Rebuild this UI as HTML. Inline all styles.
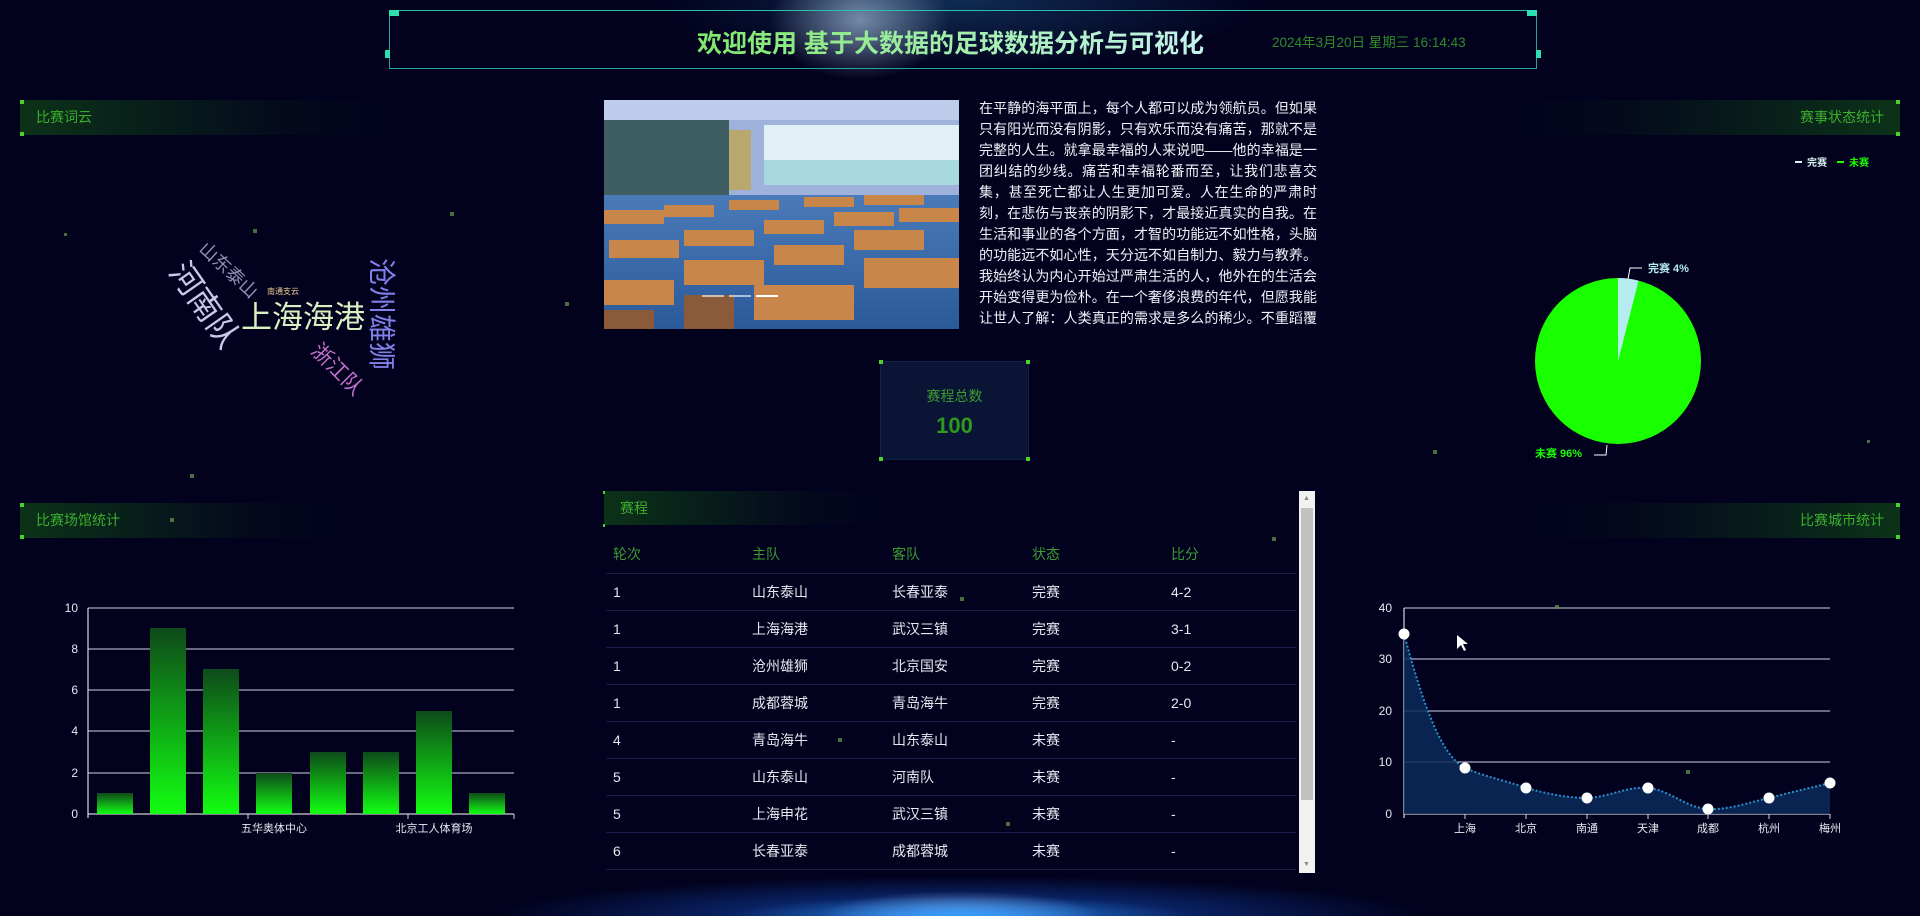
<!DOCTYPE html>
<html><head><meta charset="utf-8">
<style>
*{margin:0;padding:0;box-sizing:border-box}
body{width:1920px;height:916px;overflow:hidden;position:relative;background:#02021e;font-family:"Liberation Sans","Noto Sans CJK SC",sans-serif;color:#fff}
.bg{position:absolute;inset:0;background:
radial-gradient(ellipse 90px 60px at 860px 20px,rgba(200,230,255,.55),transparent),
radial-gradient(ellipse 300px 70px at 960px 0px,rgba(40,120,180,.35),transparent),
radial-gradient(ellipse 460px 40px at 960px 916px,rgba(40,150,255,.95),rgba(20,80,200,.4) 50%,transparent),
radial-gradient(ellipse 140px 25px at 960px 916px,rgba(220,240,255,.9),transparent);}
.hb{position:absolute;height:35px;font-size:14px;color:#3cae2c;line-height:35px}
.hb.l{background:linear-gradient(to right,rgba(20,90,20,.55),rgba(10,40,20,.2) 70%,transparent);padding-left:16px}
.hb.r{background:linear-gradient(to left,rgba(20,90,20,.55),rgba(10,40,20,.2) 70%,transparent);padding-right:16px;text-align:right}
.dot{position:absolute;width:4px;height:4px;background:#4bd22b}
.p{position:absolute;width:4px;height:4px;background:#5e8a4a;opacity:.8}
table{border-collapse:collapse}
td{height:37px;font-size:14px;color:#e8e8f0;border-bottom:1px solid #1a1f4a}
</style></head><body>
<div class="bg"></div>
<!-- title frame -->
<div style="position:absolute;left:389px;top:10px;width:1148px;height:59px;border:1px solid #1fa89a;border-top-color:#2bc0a8"></div>
<div style="position:absolute;left:389px;top:10px;width:10px;height:6px;background:#2de0b0"></div>
<div style="position:absolute;left:1527px;top:10px;width:10px;height:6px;background:#2de0b0"></div>
<div style="position:absolute;left:385px;top:50px;width:5px;height:8px;background:#2de0b0"></div>
<div style="position:absolute;left:1536px;top:50px;width:5px;height:8px;background:#2de0b0"></div>
<div style="position:absolute;left:697px;top:24px;font-size:25px;font-weight:bold;background:linear-gradient(to right,#7fe86a,#c5f4ec);-webkit-background-clip:text;color:transparent;white-space:nowrap">欢迎使用 基于大数据的足球数据分析与可视化</div>
<div style="position:absolute;left:1272px;top:31px;font-size:13.5px;color:#2f8a2a;white-space:nowrap">2024年3月20日 星期三 16:14:43</div>

<!-- headers -->
<div class="hb l" style="left:20px;top:100px;width:380px">比赛词云</div>
<div class="dot" style="left:20px;top:100px"></div><div class="dot" style="left:20px;top:132px"></div>
<div class="hb r" style="left:1500px;top:100px;width:400px">赛事状态统计</div>
<div class="dot" style="left:1896px;top:100px"></div><div class="dot" style="left:1896px;top:132px"></div>
<div class="hb l" style="left:20px;top:503px;width:330px">比赛场馆统计</div>
<div class="dot" style="left:20px;top:503px"></div><div class="dot" style="left:20px;top:535px"></div>
<div class="hb r" style="left:1530px;top:503px;width:370px">比赛城市统计</div>
<div class="dot" style="left:1896px;top:503px"></div><div class="dot" style="left:1896px;top:535px"></div>

<!-- word cloud -->
<svg style="position:absolute;left:0;top:0" width="500" height="450">
<g font-family="Liberation Sans,Noto Sans CJK SC,sans-serif">
<text x="241" y="328" font-size="31" fill="#d9f0c0">上海海港</text>
<text x="267" y="294" font-size="8" fill="#f0d090">南通支云</text>
<text transform="translate(168,272) rotate(55)" font-size="32" fill="#c8c8e8">河南队</text>
<text transform="translate(198,250) rotate(43)" font-size="18" fill="#9090b8">山东泰山</text>
<text transform="translate(310,352) rotate(45)" font-size="21" fill="#c070c8">浙江队</text>
<text transform="translate(372,258) rotate(90)" font-size="28" fill="#8080e8">沧州雄狮</text>
</g></svg>

<!-- image -->
<svg style="position:absolute;left:604px;top:100px" width="355" height="229">
<defs><linearGradient id="fl" x1="0" y1="0" x2="0" y2="1"><stop offset="0" stop-color="#4a7ab8"/><stop offset="1" stop-color="#2a5a9a"/></linearGradient></defs>
<rect width="355" height="229" fill="#9eb2dc"/>
<rect width="355" height="20" fill="#c0ccec"/>
<rect x="0" y="20" width="125" height="75" fill="#3e5e62"/>
<rect x="125" y="30" width="22" height="60" fill="#b8a870"/>
<rect x="160" y="25" width="195" height="60" fill="#e0f0f4"/>
<rect x="160" y="60" width="195" height="25" fill="#a8d8e0"/>
<rect x="0" y="95" width="355" height="134" fill="url(#fl)"/>
<g fill="#c8864a">
<rect x="0" y="110" width="60" height="14"/><rect x="60" y="105" width="50" height="12"/><rect x="125" y="100" width="50" height="10"/><rect x="200" y="97" width="50" height="10"/><rect x="260" y="95" width="60" height="10"/>
<rect x="5" y="140" width="70" height="18"/><rect x="80" y="130" width="70" height="16"/><rect x="160" y="120" width="60" height="14"/><rect x="230" y="112" width="60" height="14"/><rect x="295" y="108" width="60" height="14"/>
<rect x="0" y="180" width="70" height="25"/><rect x="80" y="160" width="80" height="25"/><rect x="170" y="145" width="70" height="20"/><rect x="250" y="130" width="70" height="20"/>
<rect x="150" y="185" width="100" height="35"/><rect x="260" y="158" width="95" height="30"/>
</g>
<g fill="#8a5a3a"><rect x="80" y="195" width="50" height="34"/><rect x="0" y="210" width="50" height="19"/></g>
<rect x="98" y="195" width="22" height="2" fill="#fff" opacity=".6"/><rect x="125" y="195" width="22" height="2" fill="#fff" opacity=".6"/><rect x="152" y="195" width="22" height="2" fill="#fff"/>
</svg>
<div style="position:absolute;left:979px;top:98px;width:338px;height:231px;overflow:hidden;font-size:14px;line-height:21px;color:#f0f0f8;text-align:justify">在平静的海平面上，每个人都可以成为领航员。但如果只有阳光而没有阴影，只有欢乐而没有痛苦，那就不是完整的人生。就拿最幸福的人来说吧——他的幸福是一团纠结的纱线。痛苦和幸福轮番而至，让我们悲喜交集，甚至死亡都让人生更加可爱。人在生命的严肃时刻，在悲伤与丧亲的阴影下，才最接近真实的自我。在生活和事业的各个方面，才智的功能远不如性格，头脑的功能远不如心性，天分远不如自制力、毅力与教养。我始终认为内心开始过严肃生活的人，他外在的生活会开始变得更为俭朴。在一个奢侈浪费的年代，但愿我能让世人了解：人类真正的需求是多么的稀少。不重蹈覆辙</div>

<!-- total box -->
<div style="position:absolute;left:880px;top:361px;width:149px;height:99px;background:#0a1535;border:1px solid #13224a"></div>
<div class="dot" style="left:879px;top:360px"></div><div class="dot" style="left:1026px;top:360px"></div><div class="dot" style="left:879px;top:457px"></div><div class="dot" style="left:1026px;top:457px"></div>
<div style="position:absolute;left:880px;top:386px;width:149px;text-align:center;font-size:14px;color:#3d9a30">赛程总数</div>
<div style="position:absolute;left:880px;top:413px;width:149px;text-align:center;font-size:22px;font-weight:bold;color:#2c9a1c">100</div>

<!-- pie -->
<svg style="position:absolute;left:1480px;top:140px" width="440" height="340">
<rect x="315" y="21" width="7" height="2" fill="#d8f0f0"/><text x="327" y="26" font-size="10" fill="#d8f0f0" font-weight="bold">完赛</text>
<rect x="357" y="21" width="7" height="2" fill="#19ff00"/><text x="369" y="26" font-size="10" fill="#19ff00" font-weight="bold">未赛</text>
<circle cx="138" cy="221" r="83" fill="#19ff00"/>
<path d="M138 221 L138 138 A83 83 0 0 1 158.6 140.6 Z" fill="#b5ecef"/>
<polyline points="148,139 150,128 162,128" fill="none" stroke="#fff" stroke-width="1"/>
<text x="168" y="132" font-size="11" fill="#b5ecef" font-weight="bold">完赛 4%</text>
<polyline points="127,305 126,315 114,315" fill="none" stroke="#fff" stroke-width="1"/>
<text x="55" y="317" font-size="11" fill="#19ff00" font-weight="bold">未赛 96%</text>
</svg>

<!-- table -->
<div class="hb l" style="left:604px;top:491px;width:280px;height:34px;line-height:34px">赛程</div>
<div class="dot" style="left:603px;top:491px;width:2px;height:3px"></div><div class="dot" style="left:603px;top:524px;width:2px;height:3px"></div>
<table style="position:absolute;left:606px;top:536px;width:690px">
<tr><td style="width:146px;color:#3d9a30;padding-left:7px">轮次</td><td style="width:140px;color:#3d9a30">主队</td><td style="width:140px;color:#3d9a30">客队</td><td style="width:139px;color:#3d9a30">状态</td><td style="color:#3d9a30">比分</td></tr>
<tr><td style="padding-left:7px">1</td><td>山东泰山</td><td>长春亚泰</td><td>完赛</td><td>4-2</td></tr>
<tr><td style="padding-left:7px">1</td><td>上海海港</td><td>武汉三镇</td><td>完赛</td><td>3-1</td></tr>
<tr><td style="padding-left:7px">1</td><td>沧州雄狮</td><td>北京国安</td><td>完赛</td><td>0-2</td></tr>
<tr><td style="padding-left:7px">1</td><td>成都蓉城</td><td>青岛海牛</td><td>完赛</td><td>2-0</td></tr>
<tr><td style="padding-left:7px">4</td><td>青岛海牛</td><td>山东泰山</td><td>未赛</td><td>-</td></tr>
<tr><td style="padding-left:7px">5</td><td>山东泰山</td><td>河南队</td><td>未赛</td><td>-</td></tr>
<tr><td style="padding-left:7px">5</td><td>上海申花</td><td>武汉三镇</td><td>未赛</td><td>-</td></tr>
<tr><td style="padding-left:7px">6</td><td>长春亚泰</td><td>成都蓉城</td><td>未赛</td><td>-</td></tr>
</table>
<div style="position:absolute;left:1299px;top:491px;width:16px;height:382px;background:#f1f1f1"></div>
<div style="position:absolute;left:1301px;top:508px;width:12px;height:292px;background:#c1c1c1"></div>
<div style="position:absolute;left:1303px;top:495px;font-size:7px;color:#888">▲</div>
<div style="position:absolute;left:1303px;top:861px;font-size:7px;color:#888">▼</div>

<!-- bar chart -->
<svg style="position:absolute;left:0;top:590px" width="530" height="260" font-family="Liberation Sans,Noto Sans CJK SC,sans-serif">
<defs><linearGradient id="bg" x1="0" y1="0" x2="0" y2="1"><stop offset="0" stop-color="#0e4a1a"/><stop offset="1" stop-color="#12ff12"/></linearGradient></defs>
<g stroke="#d0d0e8" stroke-width="1">
<line x1="88" y1="18" x2="514" y2="18"/><line x1="88" y1="59" x2="514" y2="59"/><line x1="88" y1="100" x2="514" y2="100"/><line x1="88" y1="141" x2="514" y2="141"/><line x1="88" y1="183" x2="514" y2="183"/>
<line x1="88" y1="224" x2="514" y2="224" stroke="#fff"/><line x1="88" y1="18" x2="88" y2="228" stroke="#fff"/>
<line x1="248" y1="224" x2="248" y2="229"/><line x1="408" y1="224" x2="408" y2="229"/><line x1="514" y1="224" x2="514" y2="229"/>
</g>
<g font-size="12" fill="#e8e8f0" text-anchor="end"><text x="78" y="22">10</text><text x="78" y="63">8</text><text x="78" y="104">6</text><text x="78" y="145">4</text><text x="78" y="187">2</text><text x="78" y="228">0</text></g>
<g fill="url(#bg)">
<rect x="97" y="203" width="36" height="21"/><rect x="150" y="38" width="36" height="186"/><rect x="203" y="79" width="36" height="145"/><rect x="256" y="183" width="36" height="41"/><rect x="310" y="162" width="36" height="62"/><rect x="363" y="162" width="36" height="62"/><rect x="416" y="121" width="36" height="103"/><rect x="469" y="203" width="36" height="21"/>
</g>
<g font-size="11" fill="#e8e8f0" text-anchor="middle"><text x="274" y="242">五华奥体中心</text><text x="434" y="242">北京工人体育场</text></g>
</svg>

<!-- line chart -->
<svg style="position:absolute;left:1360px;top:590px" width="560" height="260" font-family="Liberation Sans,Noto Sans CJK SC,sans-serif">
<g stroke="#d0d0e8" stroke-width="1">
<line x1="44" y1="18" x2="470" y2="18"/><line x1="44" y1="69" x2="470" y2="69"/><line x1="44" y1="121" x2="470" y2="121"/><line x1="44" y1="172" x2="470" y2="172"/>
<line x1="44" y1="224" x2="470" y2="224" stroke="#fff"/><line x1="44" y1="18" x2="44" y2="228" stroke="#fff"/>
<line x1="105" y1="224" x2="105" y2="229"/><line x1="166" y1="224" x2="166" y2="229"/><line x1="227" y1="224" x2="227" y2="229"/><line x1="288" y1="224" x2="288" y2="229"/><line x1="348" y1="224" x2="348" y2="229"/><line x1="409" y1="224" x2="409" y2="229"/><line x1="470" y1="224" x2="470" y2="229"/>
</g>
<path d="M44 44 C62 110,80 165,105 178 C128 188,145 190,166 198 C188 204,208 208,227 208 C250 207,267 196,288 198 C310 200,326 218,348 219 C370 220,390 212,409 208 C432 202,450 198,470 193 L470 224 L44 224 Z" fill="#0c2a5a" opacity=".85"/>
<path d="M44 44 C62 110,80 165,105 178 C128 188,145 190,166 198 C188 204,208 208,227 208 C250 207,267 196,288 198 C310 200,326 218,348 219 C370 220,390 212,409 208 C432 202,450 198,470 193" fill="none" stroke="#2a90d0" stroke-width="2" stroke-dasharray="2 2"/>
<g fill="#fff"><circle cx="44" cy="44" r="5.5"/><circle cx="105" cy="178" r="5.5"/><circle cx="166" cy="198" r="5.5"/><circle cx="227" cy="208" r="5.5"/><circle cx="288" cy="198" r="5.5"/><circle cx="348" cy="219" r="5.5"/><circle cx="409" cy="208" r="5.5"/><circle cx="470" cy="193" r="5.5"/></g>
<g font-size="12" fill="#e8e8f0" text-anchor="end"><text x="32" y="22">40</text><text x="32" y="73">30</text><text x="32" y="125">20</text><text x="32" y="176">10</text><text x="32" y="228">0</text></g>
<g font-size="11" fill="#e8e8f0" text-anchor="middle"><text x="105" y="242">上海</text><text x="166" y="242">北京</text><text x="227" y="242">南通</text><text x="288" y="242">天津</text><text x="348" y="242">成都</text><text x="409" y="242">杭州</text><text x="470" y="242">梅州</text></g>
<path d="M97 45 L97 59 L101 55 L104 61 L106 60 L103 54 L108 54 Z" fill="#fff"/>
</svg>

<!-- particles -->
<div class="p" style="left:253px;top:229px"></div><div class="p" style="left:64px;top:233px;width:3px;height:3px"></div>
<div class="p" style="left:450px;top:212px"></div><div class="p" style="left:190px;top:474px"></div>
<div class="p" style="left:170px;top:518px"></div><div class="p" style="left:960px;top:597px"></div>
<div class="p" style="left:838px;top:738px"></div><div class="p" style="left:1006px;top:822px"></div>
<div class="p" style="left:1433px;top:450px"></div><div class="p" style="left:1686px;top:770px"></div>
<div class="p" style="left:1272px;top:537px"></div><div class="p" style="left:565px;top:302px"></div>
<div class="p" style="left:1555px;top:605px"></div><div class="p" style="left:1867px;top:440px;width:3px;height:3px"></div>
</body></html>
